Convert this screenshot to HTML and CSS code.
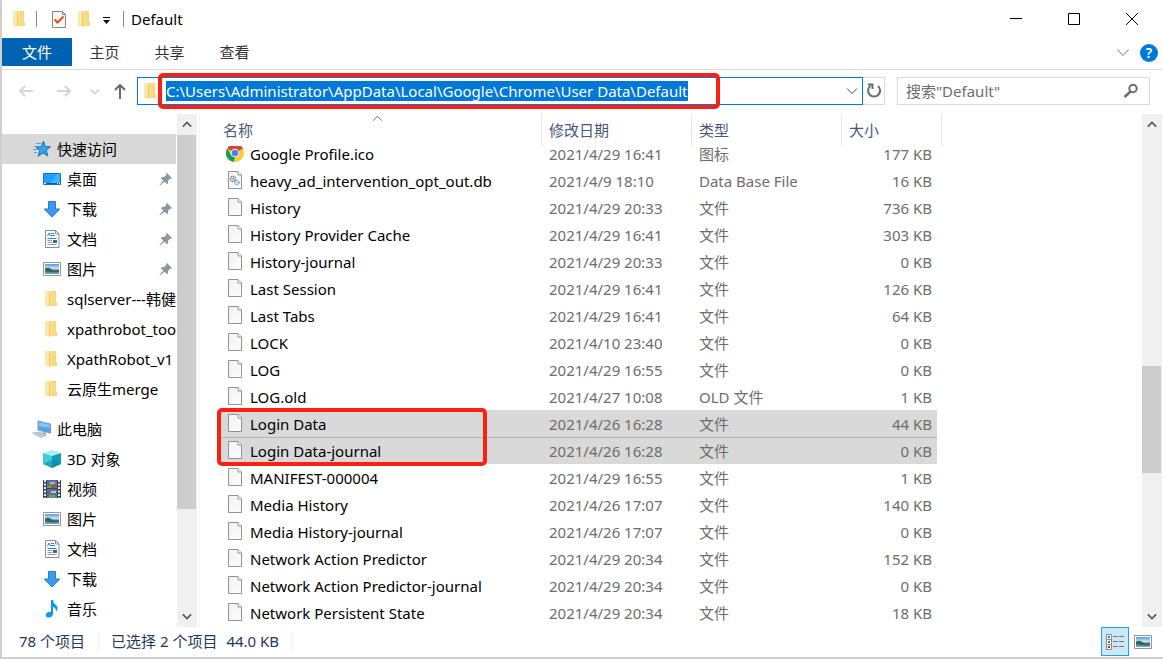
FILE: index.html
```
<!DOCTYPE html>
<html lang="zh-CN">
<head>
<meta charset="utf-8">
<title>Default</title>
<link rel="stylesheet" href="styles.css">
</head>
<body>
<svg class="defs" aria-hidden="true">
  <defs>
    <linearGradient id="g-sky" x1="0" y1="0" x2="0" y2="1"><stop offset="0" stop-color="#4f9be8"/><stop offset=".5" stop-color="#d5edf8"/><stop offset=".6" stop-color="#3f6b63"/><stop offset="1" stop-color="#6fb0cf"/></linearGradient>
    <linearGradient id="g-fold" x1="0" y1="0" x2="1" y2="0"><stop offset="0" stop-color="#fbdf90"/><stop offset="1" stop-color="#f8d677"/></linearGradient>
    <linearGradient id="g-page" x1="0" y1="0" x2="1" y2="1"><stop offset="0" stop-color="#f1f2f3"/><stop offset="1" stop-color="#fdfdfd"/></linearGradient>
    <symbol id="folder" viewBox="0 0 14 18"><path d="M4 1h8v11h1v4H4z" fill="url(#g-fold)"/><path d="M1 1h3l2 2v14l-5-1z" fill="#fce8ac"/><path d="M5.500 3v13" stroke="#eec765"/></symbol>
    <symbol id="page" viewBox="0 0 16 20"><path d="M1.500 1.500h9.500l3.500 3.500v13.500h-13z" fill="url(#g-page)" stroke="#929292"/><path d="M11 1.500V5h3.500" fill="#fff" stroke="#929292"/></symbol>
    <symbol id="gears" viewBox="0 0 16 20"><use href="#page"/><circle cx="6" cy="9" r="2.500" fill="none" stroke="#777" stroke-width="1.500" stroke-dasharray="1.300 .6"/><circle cx="6" cy="9" r="1" fill="#999"/><circle cx="10" cy="12.500" r="2" fill="none" stroke="#6fa6c4" stroke-width="1.500" stroke-dasharray="1.200 .5"/></symbol>
    <symbol id="chrome" viewBox="0 0 20 20"><circle cx="10" cy="10" r="9" fill="#fbc93a"/><path d="M10 10 2.200 5.500A9 9 0 0 1 17.800 5.500z" fill="#db4437"/><path d="M2.200 5.500 6.500 13 10 14l-1.500 5A9 9 0 0 1 2.200 5.500z" fill="#0f9d58"/><path d="M10 6h8.100a9 9 0 0 0-.6-1.100L10 4z" fill="#db4437"/><circle cx="10" cy="10" r="4.200" fill="#f2f2f2"/><circle cx="10" cy="10" r="3.300" fill="#4285f4"/></symbol>
    <symbol id="star" viewBox="0 0 20 20"><path d="m11.500 2 1.700 5.500 5.300.3-4.300 3.500 1.600 5.600-4.800-3-5 3.300 1.800-5.800L4 8l5.300-.3z" fill="#36a2ec" stroke="#1470b8"/><path d="M4 4.500h5M2 7.500h3M1 10.500h5M2 13.500h3" stroke="#5a9fd4"/></symbol>
    <symbol id="desktop" viewBox="0 0 20 20"><path d="M1.500 4.500h17v11h-17z" fill="#1ea0fb" stroke="#0b72bf"/><path d="m8 15 7-10h3v10z" fill="#45b4ff"/><path d="M2 14.500h16" stroke="#0a5d9f"/><path d="M2 14.500h2M15 14.500h1M17 14.500h1" stroke="#fff"/></symbol>
    <symbol id="down" viewBox="0 0 20 20"><path d="M6.500 2.500h7V10h4.300L10 18 2.200 10h4.300z" fill="#3a9aeb" stroke="#2580cf"/></symbol>
    <symbol id="doc" viewBox="0 0 20 20"><path d="M3.500 1.500h10l3.500 3.500v13.500H3.500z" fill="#fff" stroke="#8c8c8c"/><path d="M13.500 1.500V5H17" fill="none" stroke="#8c8c8c"/><path d="m5.500 7 1.500-3 1.500 3M9 4.500h3M9 6.500h4M5.500 9.500h9" fill="none" stroke="#2687c4"/><path d="M5.500 11.500H10M5.500 13.500H10M5.500 15.500h9" stroke="#999"/><path d="M11 11h4v3h-4z" fill="#2c7090"/></symbol>
    <symbol id="picture" viewBox="0 0 20 20"><path d="M1.500 3.500h17v13h-17z" fill="#fff" stroke="#949494"/><path d="M3 5h14v10H3z" fill="url(#g-sky)"/><path d="M3 9.500q4-2 7 1t7 1V13q-7 1-14-1z" fill="#366456"/></symbol>
    <symbol id="pc" viewBox="0 0 20 20"><path d="m6 2 12.500 3v9L6 11z" fill="#4fa7ea" stroke="#7f99aa"/><path d="m7 3 11 2.700v3L7 7z" fill="#81c8fa"/><path d="m11 13 3 .8v2.500l-4-.8z" fill="#9da7ac"/><path d="m.5 14 8-1 6 3.500-6 2z" fill="#d7dade" stroke="#a8adb3" stroke-width=".7"/><path d="m3 14.500 7 2.500M6 14l6 2.500" stroke="#a5acb4" stroke-width=".7"/></symbol>
    <symbol id="cube" viewBox="0 0 20 20"><path d="m10 1 9 3-9 3-9-3z" fill="#a5eff7"/><path d="M1 4l9 3v12l-9-4z" fill="#42cbdc"/><path d="m10 7 9-3v11l-9 4z" fill="#159bb3"/><path d="m1 15 9-4 9 4-9 4z" fill="#0786a3" opacity=".55"/></symbol>
    <symbol id="film" viewBox="0 0 20 20"><path d="M1 1h18v18H1z" fill="#424242"/><path d="M5 1h10v8H5z" fill="#3e73cd"/><path d="M5 10h10v9H5z" fill="#3e73cd"/><path d="M3 1v18M17 1v18" stroke="#eee" stroke-width="2" stroke-dasharray="2 1.500"/><path d="M8 3h5v3H8z" fill="#e5bd30"/><path d="M9 5h4v3H9zM6 13h3v2H6z" fill="#d44130"/><path d="M5 7h4v2H5zM7 16h6v3H7z" fill="#69a83c"/><path d="M9 12h5v2H9z" fill="#f0cc3d"/></symbol>
    <symbol id="note" viewBox="0 0 20 20"><path d="M9 1h2q0 3 3 5 3 3 0 7 .5-4-3-5v7q-1 4-5 3.500Q3 18 4 15q2-3 5-2z" fill="#079bef"/></symbol>
    <symbol id="pin" viewBox="0 0 14 14"><path d="m8 1 5 5-1 1-1-.4L9 9q.5 2-.7 3.400L5.500 9.700 1 13.500.5 13l3.800-4.500L1.600 6Q3 4.600 5 5l2.400-2L7 2z" fill="#8b98a1"/></symbol>
    <symbol id="caret" viewBox="0 0 12 8"><path d="m1 1.500 5 5 5-5" fill="none" stroke="currentColor"/></symbol>
  </defs>
</svg>

<main class="window">
  <header class="titlebar">
    <svg class="i-folder"><use href="#folder"/></svg>
    <span class="bar"></span>
    <button class="plain check" aria-label="属性"><svg viewBox="0 0 16 20"><path d="M1.500 2.500h10l3 3v13h-13z" fill="#f8f8f8" stroke="#858585"/><path d="M11.500 2.500v3h3" fill="none" stroke="#858585"/><path d="m3.500 10.500 3 3 6-6" fill="none" stroke="#e8510f" stroke-width="2"/></svg></button>
    <button class="plain newfolder" aria-label="新建文件夹"><svg class="i-folder"><use href="#folder"/></svg></button>
    <button class="plain more" aria-label="自定义快速访问工具栏"><svg viewBox="0 0 8 8"><path d="M0 .5h7" stroke="#000"/><path d="M0 3h7L3.500 7z"/></svg></button>
    <span class="bar"></span>
    <h1 class="title">Default</h1>
    <div class="controls">
      <button class="plain" aria-label="最小化"><svg viewBox="0 0 14 14"><path d="M1 6.500h12" stroke="#000"/></svg></button>
      <button class="plain" aria-label="最大化"><svg viewBox="0 0 14 14"><path d="M1.500 1.500h11v11h-11z" fill="none" stroke="#000"/></svg></button>
      <button class="plain" aria-label="关闭"><svg viewBox="0 0 14 14"><path d="m1 1 12 12M13 1 1 13" stroke="#000"/></svg></button>
    </div>
  </header>

  <nav class="ribbon">
    <button class="tab file">文件</button>
    <button class="tab">主页</button>
    <button class="tab">共享</button>
    <button class="tab">查看</button>
    <div class="ribbon-end">
      <button class="plain expand" aria-label="展开功能区"><svg class="i-caret"><use href="#caret"/></svg></button>
      <button class="help" aria-label="帮助">?</button>
    </div>
  </nav>

  <div class="addressbar">
    <div class="history">
      <button class="plain faded" aria-label="后退"><svg class="i-arrow" viewBox="0 0 16 16"><path d="M15 8H2M7 3 2 8l5 5" fill="none" stroke="currentColor" stroke-width="2"/></svg></button>
      <button class="plain faded forward" aria-label="前进"><svg class="i-arrow" viewBox="0 0 16 16"><path d="M1 8h13M9 3l5 5-5 5" fill="none" stroke="currentColor" stroke-width="2"/></svg></button>
      <button class="plain faded recent" aria-label="最近位置"><svg class="i-recent"><use href="#caret"/></svg></button>
      <button class="plain up" aria-label="上移"><svg class="i-arrow" viewBox="0 0 16 16"><path d="M8 16V2M3 7l5-5 5 5" fill="none" stroke="currentColor" stroke-width="2"/></svg></button>
    </div>
    <div class="path">
      <svg class="i-folder"><use href="#folder"/></svg>
      <input id="path" type="text" aria-label="地址" value="C:\Users\Administrator\AppData\Local\Google\Chrome\User Data\Default" spellcheck="false">
      <button class="plain drop" aria-label="以前的位置"><svg class="i-drop"><use href="#caret"/></svg></button>
      <span class="mark mark-path"></span>
    </div>
    <button class="refresh" aria-label="刷新"><svg viewBox="0 0 16 18"><path d="M12 4a6 6 0 1 1-7.500-.2" fill="none" stroke="#6b6b6b" stroke-width="2"/><path d="M2 2.500h4.500V7" fill="none" stroke="#6b6b6b" stroke-width="2"/></svg></button>
    <label class="search">
      <input type="text" aria-label="搜索" placeholder='搜索"Default"'>
      <svg viewBox="0 0 16 16"><circle cx="10" cy="5.500" r="3.700" fill="none" stroke="#6b6b6b" stroke-width="2"/><path d="M7.500 8.500 1.500 14" stroke="#6b6b6b" stroke-width="2.500"/></svg>
    </label>
  </div>

  <div class="body">
    <aside class="tree">
      <ul>
        <li class="root current"><svg><use href="#star"/></svg><a href="#">快速访问</a></li>
        <li><svg><use href="#desktop"/></svg><a href="#">桌面</a><svg class="pin"><use href="#pin"/></svg></li>
        <li><svg><use href="#down"/></svg><a href="#">下载</a><svg class="pin"><use href="#pin"/></svg></li>
        <li><svg><use href="#doc"/></svg><a href="#">文档</a><svg class="pin"><use href="#pin"/></svg></li>
        <li><svg><use href="#picture"/></svg><a href="#">图片</a><svg class="pin"><use href="#pin"/></svg></li>
        <li><svg class="fold"><use href="#folder"/></svg><a href="#">sqlserver---韩健</a></li>
        <li><svg class="fold"><use href="#folder"/></svg><a href="#">xpathrobot_too</a></li>
        <li><svg class="fold"><use href="#folder"/></svg><a href="#">XpathRobot_v1</a></li>
        <li><svg class="fold"><use href="#folder"/></svg><a href="#">云原生merge</a></li>
      </ul>
      <ul>
        <li class="root"><svg><use href="#pc"/></svg><a href="#">此电脑</a></li>
        <li><svg><use href="#cube"/></svg><a href="#">3D 对象</a></li>
        <li><svg><use href="#film"/></svg><a href="#">视频</a></li>
        <li><svg><use href="#picture"/></svg><a href="#">图片</a></li>
        <li><svg><use href="#doc"/></svg><a href="#">文档</a></li>
        <li><svg><use href="#down"/></svg><a href="#">下载</a></li>
        <li><svg><use href="#note"/></svg><a href="#">音乐</a></li>
      </ul>
    </aside>
    <div class="scroll">
      <button class="plain" aria-label="向上滚动"><svg class="flip"><use href="#caret"/></svg></button>
      <div class="track"><span class="thumb thumb-tree"></span></div>
      <button class="plain" aria-label="向下滚动"><svg><use href="#caret"/></svg></button>
    </div>

    <section class="files">
      <table>
        <colgroup><col class="c-name"><col class="c-date"><col class="c-type"><col class="c-size"><col></colgroup>
        <thead>
          <tr><th class="name">名称<svg class="sort"><use href="#caret"/></svg></th><th>修改日期</th><th>类型</th><th>大小</th><th class="rest"></th></tr>
        </thead>
        <tbody>
          <tr class="cut"><td><div class="cell"><svg class="big"><use href="#chrome"/></svg>Google Profile.ico</div></td><td><div class="cell">2021/4/29 16:41</div></td><td><div class="cell">图标</div></td><td><div class="cell">177 KB</div></td></tr>
          <tr><td><div class="cell"><svg><use href="#gears"/></svg>heavy_ad_intervention_opt_out.db</div></td><td>2021/4/9 18:10</td><td>Data Base File</td><td>16 KB</td></tr>
          <tr><td><div class="cell"><svg><use href="#page"/></svg>History</div></td><td>2021/4/29 20:33</td><td>文件</td><td>736 KB</td></tr>
          <tr><td><div class="cell"><svg><use href="#page"/></svg>History Provider Cache</div></td><td>2021/4/29 16:41</td><td>文件</td><td>303 KB</td></tr>
          <tr><td><div class="cell"><svg><use href="#page"/></svg>History-journal</div></td><td>2021/4/29 20:33</td><td>文件</td><td>0 KB</td></tr>
          <tr><td><div class="cell"><svg><use href="#page"/></svg>Last Session</div></td><td>2021/4/29 16:41</td><td>文件</td><td>126 KB</td></tr>
          <tr><td><div class="cell"><svg><use href="#page"/></svg>Last Tabs</div></td><td>2021/4/29 16:41</td><td>文件</td><td>64 KB</td></tr>
          <tr><td><div class="cell"><svg><use href="#page"/></svg>LOCK</div></td><td>2021/4/10 23:40</td><td>文件</td><td>0 KB</td></tr>
          <tr><td><div class="cell"><svg><use href="#page"/></svg>LOG</div></td><td>2021/4/29 16:55</td><td>文件</td><td>0 KB</td></tr>
          <tr><td><div class="cell"><svg><use href="#page"/></svg>LOG.old</div></td><td>2021/4/27 10:08</td><td>OLD 文件</td><td>1 KB</td></tr>
          <tr class="selected"><td><div class="cell"><svg><use href="#page"/></svg>Login Data</div><span class="mark mark-rows"></span></td><td>2021/4/26 16:28</td><td>文件</td><td>44 KB</td></tr>
          <tr class="selected"><td><div class="cell"><svg><use href="#page"/></svg>Login Data-journal</div></td><td>2021/4/26 16:28</td><td>文件</td><td>0 KB</td></tr>
          <tr><td><div class="cell"><svg><use href="#page"/></svg>MANIFEST-000004</div></td><td>2021/4/29 16:55</td><td>文件</td><td>1 KB</td></tr>
          <tr><td><div class="cell"><svg><use href="#page"/></svg>Media History</div></td><td>2021/4/26 17:07</td><td>文件</td><td>140 KB</td></tr>
          <tr><td><div class="cell"><svg><use href="#page"/></svg>Media History-journal</div></td><td>2021/4/26 17:07</td><td>文件</td><td>0 KB</td></tr>
          <tr><td><div class="cell"><svg><use href="#page"/></svg>Network Action Predictor</div></td><td>2021/4/29 20:34</td><td>文件</td><td>152 KB</td></tr>
          <tr><td><div class="cell"><svg><use href="#page"/></svg>Network Action Predictor-journal</div></td><td>2021/4/29 20:34</td><td>文件</td><td>0 KB</td></tr>
          <tr><td><div class="cell"><svg><use href="#page"/></svg>Network Persistent State</div></td><td>2021/4/29 20:34</td><td>文件</td><td>18 KB</td></tr>
        </tbody>
      </table>
    </section>
    <div class="scroll">
      <button class="plain" aria-label="向上滚动"><svg class="flip"><use href="#caret"/></svg></button>
      <div class="track"><span class="thumb thumb-files"></span></div>
      <button class="plain" aria-label="向下滚动"><svg><use href="#caret"/></svg></button>
    </div>
  </div>

  <footer class="status">
    <span class="count">78 个项目</span>
    <span class="picked"><span>已选择 2 个项目</span><span>44.0 KB</span></span>
    <div class="views">
      <button class="view on" aria-label="详细信息"><svg viewBox="0 0 20 18"><path d="M1.500 1.500h5v5h-5zM1.500 6.500h5v5h-5zM1.500 11.500h5v5h-5z" fill="#fff" stroke="#8a8a8a"/><path d="M3 3h2v2H3z" fill="#2d77c2"/><path d="M3 8h2v2H3z" fill="#6c7820"/><path d="M3 13h2v2H3z" fill="#c22c1b"/><path d="M8 3.500h5M14 3.500h5M8 8.500h5M14 8.500h5M8 13.500h5M14 13.500h5" stroke="#777"/></svg></button>
      <button class="view" aria-label="大缩略图"><svg class="thumbs"><use href="#picture"/></svg></button>
    </div>
  </footer>
</main>
<script src="app.js"></script>
</body>
</html>
```

FILE: styles.css
```
* { box-sizing: border-box; }

body {
  margin: 0;
  height: 100vh;
  padding: 0 0 2px 2px;
  background: #cfcfcf;
  font: 15px/20px "Noto Sans", "Noto Sans CJK SC", sans-serif;
  color: #000;
}

button, input { font: inherit; color: inherit; border: 0; padding: 0; background: none; }
svg { display: block; flex: none; }
.defs { position: absolute; width: 0; height: 0; }

.window {
  height: 100%;
  display: flex;
  flex-direction: column;
  padding-right: 1px;
  background: #fff;
  overflow: hidden;
}

.plain { display: flex; align-items: center; justify-content: center; }
.i-folder { width: 14px; height: 18px; }

.titlebar { display: flex; align-items: center; height: 38px; padding: 0 1px 0 10px; }
.bar { width: 1px; height: 16px; background: #8c8c8c; margin-left: 10px; }
.check { margin-left: 14px; }
.check svg { width: 16px; height: 20px; }
.newfolder { margin-left: 10px; }
.more { margin: 4px 0 0 12px; }
.more svg { width: 8px; height: 8px; }
.more + .bar { margin-left: 12px; }
.title { margin: 0 0 0 7px; font-size: 15px; font-weight: 400; }
.controls { display: flex; align-self: stretch; margin-left: auto; }
.controls button { width: 58px; }
.controls svg { width: 14px; height: 14px; }

.ribbon { display: flex; height: 32px; padding-bottom: 3px; border-bottom: 1px solid #dadbdc; }
.tab { width: 65px; color: #333; }
.tab.file { width: 70px; background: #0063b1; color: #fff; }
.ribbon-end { display: flex; align-items: center; gap: 10px; margin-left: auto; padding: 1px 4px 0 0; }
.expand { color: #9a9a9a; }
.i-caret { width: 14px; height: 9px; }
.help {
  width: 18px; height: 18px; border-radius: 50%; background: #0078d7; color: #fff;
  font-size: 14px; line-height: 18px; font-weight: 600; text-align: center;
}

.addressbar { display: flex; align-items: center; height: 44px; padding: 0 12px 2px 0; }
.history { display: flex; align-items: center; width: 135px; padding-left: 16px; }
.i-arrow { width: 16px; height: 16px; }
.forward { margin-left: 22px; }
.recent { margin-left: 18px; stroke-width: 2; }
.up { margin-left: 12px; color: #6b6b6b; }
.faded { color: #d5d5d5; }
.i-recent { width: 10px; height: 7px; }
.path {
  position: relative; flex: 1; display: flex; align-items: center;
  height: 28px; border: 1px solid #0078d7; padding-left: 5px;
}
.path input { flex: 1; min-width: 0; height: 22px; margin-left: 9px; outline: none; }
.path input::selection { background: #0078d7; color: #fff; }
.drop { width: 20px; color: #444; }
.i-drop { width: 12px; height: 8px; }
.refresh {
  width: 22px; height: 28px; border: 1px solid #d9d9d9; border-left: 0;
  display: flex; align-items: center; justify-content: center;
}
.refresh svg { width: 16px; height: 18px; }
.search {
  display: flex; align-items: center; width: 253px; height: 28px; margin-left: 12px;
  border: 1px solid #d9d9d9; padding: 0 10px 0 8px;
}
.search input { flex: 1; min-width: 0; outline: none; }
.search input::placeholder { color: #6d6d6d; opacity: 1; }
.search svg { width: 16px; height: 16px; }

.mark { position: absolute; z-index: 2; border: 4px solid #fb2112; border-radius: 5px; pointer-events: none; }
.mark-path { left: 20px; top: -5px; width: 562px; height: 36px; }
.mark-rows { left: -2px; top: -2px; width: 270px; height: 58px; }

.body { flex: 1; min-height: 0; display: flex; }
.tree { width: 174px; padding-top: 20px; overflow: hidden; }
.tree ul { list-style: none; margin: 0 0 10px; padding: 0; }
.tree li { display: flex; align-items: center; height: 30px; padding-left: 40px; white-space: nowrap; }
.tree li.root { padding-left: 30px; }
.tree li.current { background: #d9d9d9; }
.tree svg { width: 20px; height: 20px; margin-right: 5px; }
.tree svg.fold { width: 14px; height: 18px; margin: 0 9px 0 2px; }
.tree a { color: inherit; text-decoration: none; }
.tree svg.pin { width: 14px; height: 14px; margin: 0 3px 0 auto; }

.scroll { width: 20px; display: flex; flex-direction: column; background: #f0f0f0; color: #555; stroke-width: 2; }
.tree + .scroll { margin-left: 1px; }
.scroll button { height: 21px; padding-right: 1px; }
.scroll svg { width: 10px; height: 7px; }
.flip { transform: rotate(180deg); }
.track { flex: 1; display: flex; flex-direction: column; }
.thumb { width: 19px; background: #cdcdcd; }
.thumb-tree { flex: 0 0 374px; }
.thumb-files { flex: 0 0 107px; margin-top: 231px; }

.files { flex: 1; min-width: 0; margin-left: 2px; padding-left: 19px; border-left: 1px solid #f3f3f3; overflow: hidden; }
table { width: 100%; table-layout: fixed; border-collapse: separate; border-spacing: 0; }
.c-name { width: 323px; }
.c-date, .c-type { width: 150px; }
.c-size { width: 100px; }
th {
  position: relative; z-index: 1; height: 32px; padding: 0 0 0 7px; border-right: 1px solid #e5e5e5;
  background: #fff; color: #44597a; font-weight: 400; text-align: left;
}
th.name { padding-left: 4px; }
th.rest { border: 0; }
.sort { position: absolute; top: 1px; left: 153px; width: 11px; height: 7px; transform: rotate(180deg); color: #555; }
td { height: 27px; padding: 0 0 0 7px; color: #6d6d6d; white-space: nowrap; }
td:first-child { position: relative; padding-left: 8px; color: #000; }
td:nth-child(4) { padding: 0 5px 0 0; border-right: 5px solid transparent; background-clip: padding-box; text-align: right; }
.cell { display: flow-root; height: 27px; line-height: 28px; }
td:first-child .cell { display: flex; align-items: center; }
.cell svg { width: 16px; height: 20px; margin: 0 7px 2px 0; }
.cell svg.big { width: 20px; height: 20px; margin: 0 5px 2px -2px; }
.cut td { height: 21px; }
.cut .cell { margin-top: -6px; }
.selected td { background-color: #d9d9d9; }
.selected + .selected td { background-image: linear-gradient(#b5b5b5, #b5b5b5); background-size: 100% 1px; background-repeat: no-repeat; }

.status { display: flex; align-items: center; height: 30px; padding: 0 3px 0 17px; color: #1e395b; line-height: 18px; }
.count { width: 80px; padding-bottom: 2px; border-right: 1px solid #f0f0f0; }
.picked { display: flex; gap: 9px; padding: 0 12px 2px; border-right: 1px solid #f0f0f0; }
.views { display: flex; align-self: stretch; margin-left: auto; padding-right: 2px; }
.view { display: flex; align-items: center; justify-content: center; width: 28px; height: 29px; }
.view svg { width: 20px; height: 18px; }
.view svg.thumbs { height: 20px; }
.view.on { border: 1px solid #26a0da; background: #cbe8f6; }
```

FILE: app.js
```
const path = document.getElementById("path");
path.focus();
path.select();
```
